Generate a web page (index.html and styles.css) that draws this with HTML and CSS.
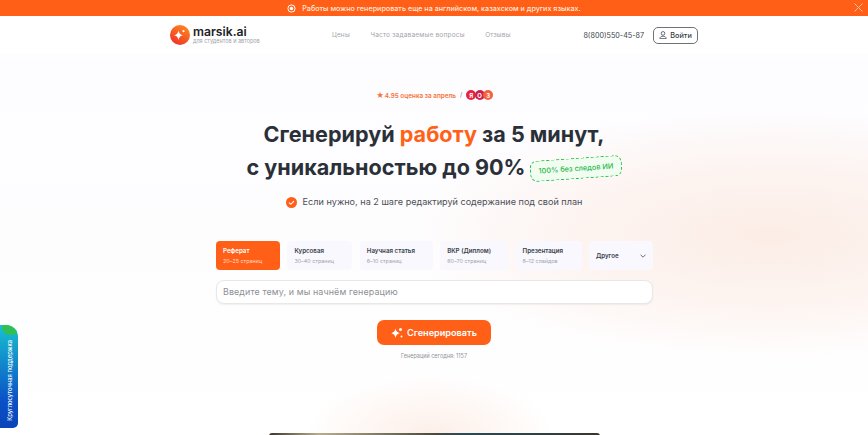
FILE: index.html
```html
<!DOCTYPE html>
<html lang="ru">
<head>
<meta charset="utf-8">
<title>marsik.ai</title>
<link rel="stylesheet" href="styles.css">
</head>
<body>
<div class="banner">
  <svg class="banner-icon" viewBox="0 0 10 10" width="9" height="9"><circle cx="5" cy="5" r="4" fill="none" stroke="#fff" stroke-width="1.1"/><circle cx="5" cy="5" r="2" fill="#fff"/></svg>
  <span>Работы можно генерировать еще на английском, казахском и других языках.</span>
  <svg class="banner-close" viewBox="0 0 10 10" width="9" height="9"><path d="M.5.5l9 9M9.5.5l-9 9" stroke="#ffc9ae" stroke-width="1"/></svg>
</div>
<header class="header">
  <div class="header-inner">
    <div class="logo">
      <svg class="logo-mark" viewBox="0 0 20 20" width="20" height="20">
        <defs><linearGradient id="lg" x1="0.8" y1="0" x2="0.2" y2="1"><stop offset="0" stop-color="#ff8a1c"/><stop offset="1" stop-color="#ee2f2c"/></linearGradient></defs>
        <circle cx="10" cy="10" r="10" fill="url(#lg)"/>
        <path d="M8.5 5.5q.6 4 4.5 4.7q-3.9.7-4.5 4.7q-.6-4-4.500-4.700q3.900-.7 4.500-4.700z" fill="#fff"/>
        <circle cx="13.500" cy="6.200" r="1.100" fill="#fff"/>
      </svg>
      <div class="logo-text">
        <div class="logo-name">marsik.ai</div>
        <div class="logo-sub">для студентов и авторов</div>
      </div>
    </div>
    <nav class="nav">
      <a>Цены</a>
      <a>Часто задаваемые вопросы</a>
      <a>Отзывы</a>
    </nav>
    <div class="header-right">
      <span class="phone">8(800)550-45-87</span>
      <button class="login">
        <svg viewBox="0 0 10 10" width="8" height="8"><circle cx="5" cy="3" r="2.300" fill="none" stroke="#333a45" stroke-width=".9"/><path d="M1 9.500c0-4 8-4 8 0z" fill="none" stroke="#333a45" stroke-width=".9"/></svg>
        Войти
      </button>
    </div>
  </div>
</header>
<main class="hero">
  <div class="rating">
    <span class="rating-text"><span class="star">★</span> 4.95 оценка за апрель</span>
    <span class="slash">/</span>
    <span class="badges"><i class="b b1">Я</i><i class="b b2">О</i><i class="b b3">З</i></span>
  </div>
  <h1 class="title">
    <span class="line">Сгенерируй <em>работу</em> за 5 минут,</span>
    <span class="line">с уникальностью до 90%<span class="tag">100% без следов ИИ</span></span>
  </h1>
  <p class="sub">
    <svg viewBox="0 0 12 12" width="11" height="11"><circle cx="6" cy="6" r="6" fill="#ff5f17"/><path d="M3.300 6.200l1.900 1.800 3.500-3.500" fill="none" stroke="#fff" stroke-width="1.200"/></svg>
    Если нужно, на 2 шаге редактируй содержание под свой план
  </p>
  <div class="types">
    <div class="type active"><b>Реферат</b><span>20–25 страниц</span></div>
    <div class="type w-course"><b>Курсовая</b><span>30–40 страниц</span></div>
    <div class="type w-article"><b>Научная статья</b><span>6–10 страниц</span></div>
    <div class="type w-vkr"><b>ВКР (Диплом)</b><span>60–70 страниц</span></div>
    <div class="type w-pres"><b>Презентация</b><span>8–12 слайдов</span></div>
    <div class="type other"><b>Другое</b><svg viewBox="0 0 10 6" width="6" height="4"><path d="M.7.7L5 5l4.300-4.300" fill="none" stroke="#333a45" stroke-width="1.200"/></svg></div>
  </div>
  <div class="input">Введите тему, и мы начнём генерацию</div>
  <button class="generate">
    <svg viewBox="0 0 12 12" width="12" height="12"><path d="M4.500 1.500q.6 3.900 4.300 4.700q-3.700.8-4.300 4.700q-.6-3.900-4.300-4.700q3.700-.8 4.300-4.700z" fill="#fff"/><circle cx="9.500" cy="2.500" r="1.500" fill="#fff"/><circle cx="10.500" cy="9.500" r="1" fill="#fff"/></svg>
    Сгенерировать
  </button>
  <div class="count">Генераций сегодня: 1157</div>
  <div class="preview"></div>
</main>
<aside class="support"><span>Круглосуточная поддержка</span></aside>
</body>
</html>
```
FILE: styles.css
```css
* { box-sizing: border-box; }
html, body { margin: 0; height: 435px; overflow: hidden; }
body {
  font-family: Inter, "Noto Sans", sans-serif;
  color: #2b3038;
  background: #fff;
}
.banner {
  position: relative;
  height: 16px;
  background: #ff5f17;
  color: #ffe9dc;
  font-size: 7.200px;
  font-weight: 500;
  display: flex;
  align-items: center;
  justify-content: center;
  gap: 6px;
}
.banner-close { position: absolute; right: 5px; top: 3px; }
.header { height: 38px; background: #fff; display: flex; justify-content: center; }
.header-inner { width: 528px; display: flex; align-items: center; }
.logo { display: flex; align-items: center; gap: 3px; width: 162px; }
.logo-name { font-size: 12.200px; font-weight: 600; line-height: 13px; color: #1d2026; }
.logo-sub { font-size: 5.500px; line-height: 7px; color: #a0a3aa; }
.nav { display: flex; gap: 20.500px; font-size: 6.500px; color: #a3a6ac; letter-spacing: .2px; }
.header-right { margin-left: auto; display: flex; align-items: center; gap: 9px; }
.phone { font-size: 7.200px; color: #3a3f48; }
.login {
  width: 45px; height: 17px; padding: 0;
  background: #fff; border: 1px solid #6e727a; border-radius: 5px;
  display: flex; align-items: center; justify-content: center; gap: 3px;
  font: 500 7.300px Inter, sans-serif; color: #333a45;
}
.hero {
  position: relative;
  height: 381px;
  display: flex; flex-direction: column; align-items: center;
  background:
    radial-gradient(ellipse 125px 65px at 430px 385px, #fdeee7 0%, rgba(253,238,231,.45) 55%, rgba(255,255,255,0) 100%),
    radial-gradient(ellipse 360px 125px at 770px 182px, #fcede6 0%, rgba(252,237,230,.55) 55%, rgba(255,255,255,0) 100%),
    linear-gradient(#fdfcff, #fefdfe 50%, #fff);
}
.rating { margin-top: 35px; height: 12px; display: flex; align-items: center; gap: 4px; font-size: 6.350px; font-weight: 600; }
.rating-text { color: #f5733a; }
.star { font-size: 7.500px; margin-right: -1px; }
.slash { color: #777; font-weight: 400; }
.badges { display: flex; }
.b {
  width: 10px; height: 10px; border-radius: 50%;
  display: flex; align-items: center; justify-content: center;
  font: 700 6px Inter, sans-serif; color: #fff; margin-right: -1.500px;
}
.b1 { background: #e8213e; }
.b2 { background: #c9224f; }
.b3 { background: #f4603a; }
.title { margin: 17px 0 0; font-size: 21.600px; font-weight: 700; line-height: 33px; text-align: center; color: #2b3038; }
.line { display: block; white-space: nowrap; }
.title em { font-style: normal; color: #ff6216; }
.tag {
  display: inline-block;
  margin-left: 4px;
  width: 92px;
  text-align: center;
  height: 21px;
  line-height: 19px;
  font-size: 7.300px;
  font-weight: 500;
  color: #27b84a;
  background: #f2fdf1;
  border: 1px dashed #22c04a;
  border-radius: 7px;
  transform: rotate(-4deg);
  vertical-align: 4px;
}
.sub { margin: 8px 0 0; font-size: 9.100px; line-height: 20px; color: #4a4f57; display: flex; align-items: center; gap: 6px; }
.types { margin: 29px 0 0 1px; width: 437px; display: flex; gap: 7.400px; }
.type {
  height: 29px; width: 65px; padding: 0 7px;
  background: #f9f8fe; border-radius: 4px;
  display: flex; flex-direction: column; justify-content: center; gap: 2px;
  font-size: 5.400px; color: #a0a3aa;
}
.type b { font-size: 6.200px; font-weight: 600; color: #3a3f48; line-height: 9px; }
.type span { line-height: 8px; }
.type.active { width: 64px; background: #ff5f17; color: #ffdcc9; }
.type.active b { color: #fff; }
.w-course { width: 65px; }
.w-article { width: 73px; }
.w-vkr { width: 68px; }
.w-pres { width: 66px; }
.type.other { width: 64px; flex-direction: row; align-items: center; justify-content: space-between; padding: 0 7px; }
.input {
  margin: 10px 0 0 1px; width: 437px; height: 24px; padding: 0 6px;
  background: #fff; border: 1.500px solid #e9e8e6; border-radius: 8px;
  box-shadow: 0 1px 2px rgba(0,0,0,.06);
  font-size: 8.900px; line-height: 21px; color: #8e9095; letter-spacing: .12px;
}
.generate {
  margin-top: 16px; width: 114px; height: 25px; padding: 0;
  background: #ff5f17; border: 0; border-radius: 7px;
  display: flex; align-items: center; justify-content: center; gap: 4px;
  font: 600 9.150px Inter, sans-serif; color: #fff;
}
.count { margin-top: 7px; font-size: 5.500px; line-height: 8px; color: #8e9298; }
.preview {
  position: absolute; left: 269px; top: 379px;
  width: 331px; height: 12px;
  background: linear-gradient(90deg, #3a3630, #b8ad90 15%, #4a4a40 50%, #2a4a55 60%, #3a3630);
  border-radius: 3px 3px 0 0;
}
.support {
  position: fixed; left: 0; top: 325px;
  width: 18px; height: 103px;
  padding-top: 7px;
  background: linear-gradient(#18c0d0, #0a4fc6 75%, #0a44b8);
  border-radius: 0 12px 5px 0;
  overflow: hidden;
  display: flex; align-items: center; justify-content: center;
}
.support::before {
  content: ""; position: absolute; left: 2px; top: -5px;
  width: 18px; height: 15px; border-radius: 50%; background: #2fbf55;
}
.support span {
  position: relative;
  writing-mode: vertical-rl; transform: rotate(180deg);
  font-size: 5.800px; font-weight: 500; color: #fff; white-space: nowrap;
}
```
